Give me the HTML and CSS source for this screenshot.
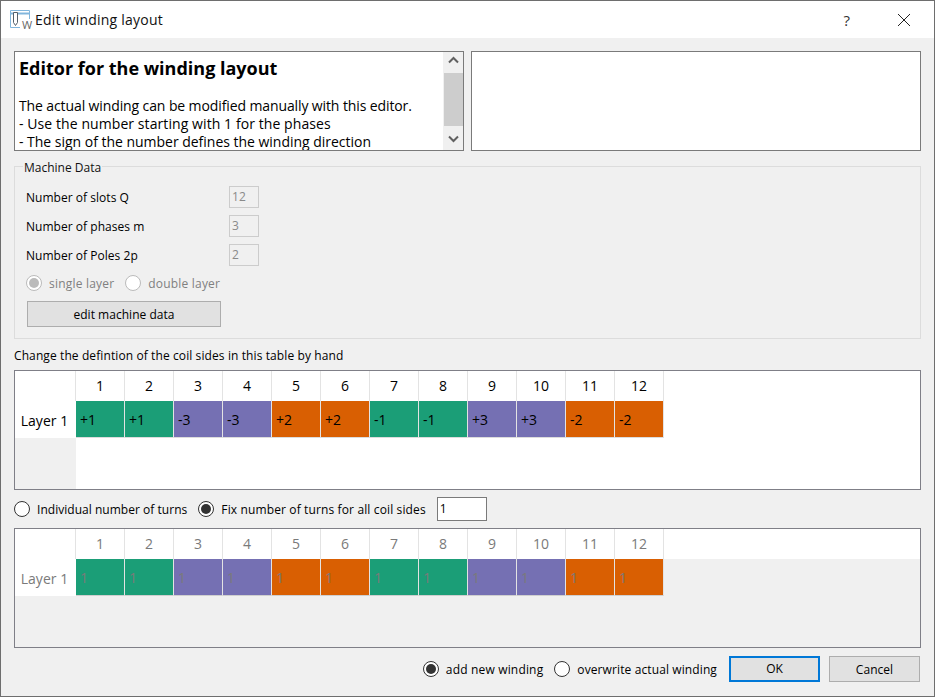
FILE: index.html
```html
<!DOCTYPE html>
<html lang="en">
<head>
<meta charset="utf-8">
<title>Edit winding layout</title>
<link rel="stylesheet" href="styles.css">
</head>
<body>
<div class="window">
  <header class="titlebar">
    <svg class="appicon" width="20" height="20" viewBox="0 0 20 20" aria-hidden="true">
      <path d="M10 17.5H0.5V0.5H19.5V9" fill="none" stroke="#82b6dc" stroke-width="1"/>
      <path d="M1 3.5H19" stroke="#82b6dc" stroke-width="2"/>
      <path d="M3.5 2.5H7.5V12.5L5.5 15.5L3.5 12.5Z" fill="#fff" stroke="#55606a" stroke-width="1"/>
    </svg>
    <span class="appicon-w">W</span>
    <span class="title">Edit winding layout</span>
    <span class="help">?</span>
    <svg class="close" width="14" height="14" viewBox="0 0 14 14" aria-hidden="true">
      <path d="M1 1L13 13M13 1L1 13" stroke="#222" stroke-width="1" fill="none"/>
    </svg>
  </header>
  <main class="content">
    <section class="panels">
      <div class="textbox">
        <div class="textbody">
          <h1>Editor for the winding layout</h1>
          <p>The actual winding can be modified manually with this editor.<br><span class="line2">- Use the number starting with 1 for the phases</span><br><span class="line3">- The sign of the number defines the winding direction</span></p>
        </div>
        <div class="scrollbar">
          <svg width="17" height="17" viewBox="0 0 17 17" aria-hidden="true"><path d="M4 10.5L8.5 6L13 10.5" fill="none" stroke="#606060" stroke-width="2"/></svg>
          <div class="thumb"></div>
          <svg width="17" height="17" viewBox="0 0 17 17" aria-hidden="true"><path d="M4 6.5L8.5 11L13 6.5" fill="none" stroke="#606060" stroke-width="2"/></svg>
        </div>
      </div>
      <div class="textbox"></div>
    </section>

    <fieldset class="group">
      <legend>Machine Data</legend>
      <div class="fieldrow"><span class="fieldlabel">Number of slots Q</span><span class="numbox">12</span></div>
      <div class="fieldrow"><span class="fieldlabel">Number of phases m</span><span class="numbox">3</span></div>
      <div class="fieldrow"><span class="fieldlabel">Number of Poles 2p</span><span class="numbox">2</span></div>
      <div class="layerrow">
        <span class="radio off checked"></span><span class="dim">single layer</span>
        <span class="radio off second"></span><span class="dim">double layer</span>
      </div>
      <div class="btn edit">edit machine data</div>
    </fieldset>

    <div class="hint">Change the defintion of the coil sides in this table by hand</div>

    <div class="table">
      <div class="corner"></div>
      <div class="head">1</div><div class="head">2</div><div class="head">3</div><div class="head">4</div><div class="head">5</div><div class="head">6</div><div class="head">7</div><div class="head">8</div><div class="head">9</div><div class="head">10</div><div class="head">11</div><div class="head">12</div>
      <div class="rowhead">Layer 1</div>
      <div class="cell green">+1</div><div class="cell green">+1</div><div class="cell purple">-3</div><div class="cell purple">-3</div><div class="cell orange">+2</div><div class="cell orange">+2</div><div class="cell green">-1</div><div class="cell green">-1</div><div class="cell purple">+3</div><div class="cell purple">+3</div><div class="cell orange">-2</div><div class="cell orange">-2</div>
      <div class="fill"></div>
      <div class="gutter"></div>
      <div class="rest"></div>
    </div>

    <div class="turnsrow">
      <span class="radio"></span><span class="turnlabel">Individual number of turns</span>
      <span class="radio checked dark gap"></span><span class="turnlabel wide">Fix number of turns for all coil sides</span>
      <span class="turnsbox">1</span>
    </div>

    <div class="table disabled">
      <div class="corner"></div>
      <div class="head">1</div><div class="head">2</div><div class="head">3</div><div class="head">4</div><div class="head">5</div><div class="head">6</div><div class="head">7</div><div class="head">8</div><div class="head">9</div><div class="head">10</div><div class="head">11</div><div class="head">12</div>
      <div class="rowhead">Layer 1</div>
      <div class="cell green">1</div><div class="cell green">1</div><div class="cell purple">1</div><div class="cell purple">1</div><div class="cell orange">1</div><div class="cell orange">1</div><div class="cell green">1</div><div class="cell green">1</div><div class="cell purple">1</div><div class="cell purple">1</div><div class="cell orange">1</div><div class="cell orange">1</div>
      <div class="fill"></div>
      <div class="gutter"></div>
      <div class="rest"></div>
    </div>

    <footer class="actions">
      <span class="radio checked dark"></span><span class="turnlabel addlabel">add new winding</span>
      <span class="radio gap"></span><span class="turnlabel overlabel">overwrite actual winding</span>
      <div class="btn ok">OK</div>
      <div class="btn cancel">Cancel</div>
    </footer>
  </main>
</div>
</body>
</html>
```
FILE: styles.css
```css
* { box-sizing: border-box; }
html, body { margin: 0; padding: 0; }
body {
  width: 935px;
  height: 697px;
  overflow: hidden;
  font-family: "Open Sans", "Noto Sans", sans-serif;
  font-size: 12px;
  letter-spacing: 0.03px;
  color: #000;
}
.window {
  width: 935px;
  height: 697px;
  border: 1px solid #6e6e6e;
  background: #f0f0f0;
  display: flex;
  flex-direction: column;
}
.titlebar {
  height: 37px;
  background: #fff;
  display: flex;
  align-items: center;
  position: relative;
  padding-left: 9px;
  flex: none;
}
.appicon { flex: none; margin-top: 1px; }
.appicon-w {
  position: absolute;
  left: 20px;
  top: 18px;
  font-size: 11px;
  line-height: 11px;
  color: #666;
  background: #fff;
  padding-left: 1px;
}
.title { margin-left: 5px; font-size: 14px; letter-spacing: 0.22px; color: #111; }
.help { margin-left: auto; font-size: 15px; color: #333; }
.close { margin-left: 47px; margin-right: 23px; }
.content {
  flex: 1;
  padding: 13px 13px 0;
  display: flex;
  flex-direction: column;
}
.panels { display: flex; gap: 7px; height: 100px; flex: none; }
.textbox {
  width: 450px;
  height: 100px;
  background: #fff;
  border: 1px solid #7a7a7a;
  display: flex;
  overflow: hidden;
}
.textbody { flex: 1; padding: 4px 0 0 4px; font-size: 14px; letter-spacing: -0.11px; line-height: 18px; white-space: nowrap; }
.textbody h1 { margin: 0 0 17px; font-size: 18px; line-height: 24px; font-weight: 700; letter-spacing: 0; }
.textbody p { margin: 0; }
.line2 { letter-spacing: 0.08px; }
.line3 { letter-spacing: -0.02px; }
.scrollbar {
  width: 20px;
  background: #f0f0f0;
  flex: none;
  display: flex;
  flex-direction: column;
  align-items: center;
  padding: 0 1px;
}
.scrollbar svg { flex: none; }
.thumb { width: 19px; height: 53px; background: #cdcdcd; margin-top: 4px; margin-bottom: 4px; flex: none; }
.group {
  margin: 6px 0 0;
  padding: 0 0 0 11px;
  height: 182px;
  border: 1px solid #dcdcdc;
  flex: none;
}
.group legend { margin-left: -3px; padding: 4px 1px 0; font-size: 12px; line-height: 14px; letter-spacing: 0; color: #111; }
.fieldrow { display: flex; align-items: center; height: 22px; margin-bottom: 7px; }
.fieldrow:first-of-type { margin-top: 11px; }
.fieldlabel { width: 203px; }
.numbox {
  width: 30px;
  height: 22px;
  border: 1px solid #ccc;
  padding: 0 0 0 2px;
  color: #8a8a8a;
  line-height: 20px;
}
.layerrow { display: flex; align-items: center; height: 20px; }
.dim { color: #808080; margin-left: 7px; letter-spacing: 0.2px; }
.radio {
  width: 16px;
  height: 16px;
  border-radius: 50%;
  border: 1px solid #333;
  background: #fff;
  flex: none;
  position: relative;
}
.radio.off { border-color: #bbb; }
.radio.checked::after {
  content: "";
  position: absolute;
  left: 2px;
  top: 2px;
  width: 10px;
  height: 10px;
  border-radius: 50%;
  background: #bbb;
}
.radio.dark::after { background: #333; }
.second { margin-left: 11px; }
.btn {
  background: #e1e1e1;
  border: 1px solid #adadad;
  height: 26px;
  line-height: 25px;
  text-align: center;
}
.edit { width: 194px; margin: 8px 0 0 1px; }
.hint { margin-top: 9px; height: 16px; line-height: 16px; letter-spacing: 0.1px; flex: none; }
.table {
  margin-top: 6px;
  width: 907px;
  height: 120px;
  border: 1px solid #7f7f87;
  background: #fff;
  display: grid;
  grid-template-columns: 61px repeat(12, 49px) 1fr;
  grid-template-rows: 30px 37px 1fr;
  flex: none;
}
.corner { border-right: 1px solid #e3e3e3; }
.head {
  border-right: 1px solid #e3e3e3;
  font-size: 14px;
  text-align: center;
  line-height: 30px;
}
.rowhead {
  grid-column: 1;
  font-size: 14px;
  line-height: 39px;
  text-align: center;
  padding-right: 2px;
}
.cell {
  border-right: 1px solid #e3e3e3;
  border-bottom: 1px solid #dcdcdc;
  font-size: 14px;
  line-height: 37px;
  padding-left: 4px;
}
.green { background: #1b9e77; }
.purple { background: #7570b3; }
.orange { background: #d95f02; }
.gutter { grid-column: 1; background: #f0f0f0; }
.rest { grid-column: 2 / -1; background: #fff; }
.disabled { margin-top: 7px; }
.disabled .head, .disabled .rowhead, .disabled .cell { color: #7a7a7a; }
.disabled .gutter, .disabled .rest, .disabled .fill { background: #f0f0f0; }
.disabled .cell { border-bottom-color: #cfcfcf; }
.turnsrow {
  display: flex;
  align-items: center;
  height: 24px;
  margin-top: 7px;
  flex: none;
}
.turnlabel { margin-left: 7px; }
.gap { margin-left: 11px; }
.wide { letter-spacing: 0.13px; }
.addlabel { letter-spacing: 0.17px; }
.overlabel { letter-spacing: 0.11px; }
.turnsbox {
  width: 50px;
  height: 24px;
  margin-left: 11px;
  background: #fff;
  border: 1px solid #7a7a7a;
  line-height: 22px;
  padding-left: 2px;
}
.actions {
  display: flex;
  align-items: center;
  justify-content: flex-end;
  height: 26px;
  margin-top: 8px;
  padding-right: 1px;
  flex: none;
}
.ok { width: 91px; margin-left: 12px; border: 2px solid #0078d7; line-height: 22px; }
.cancel { width: 91px; margin-left: 9px; }
```
